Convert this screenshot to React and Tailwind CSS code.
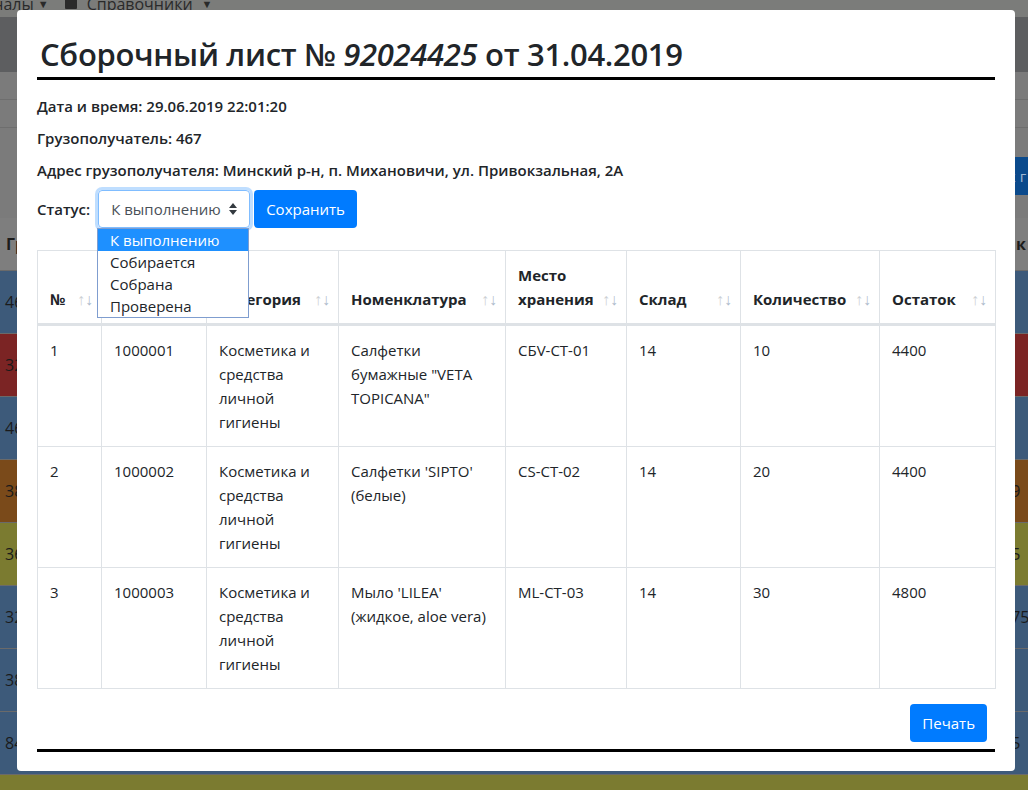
/* Сборочный лист — модальное окно */
const font = { fontFamily: '"Open Sans", "Noto Sans", sans-serif' };

const rows = [
  { n: "1", code: "1000001", cat: "Косметика и средства личной гигиены", name: 'Салфетки бумажные "VETA TOPICANA"', place: "СБV-СТ-01", store: "14", qty: "10", rest: "4400" },
  { n: "2", code: "1000002", cat: "Косметика и средства личной гигиены", name: "Салфетки 'SIPTO' (белые)", place: "CS-CT-02", store: "14", qty: "20", rest: "4400" },
  { n: "3", code: "1000003", cat: "Косметика и средства личной гигиены", name: "Мыло 'LILEA' (жидкое, aloe vera)", place: "ML-CT-03", store: "14", qty: "30", rest: "4800" },
];

const heads = ["№", "", "Категория", "Номенклатура", "Место хранения", "Склад", "Количество", "Остаток"];
const widths = [64, 105, 132, 167, 121, 114, 139, 116];

const bgRows = [
  { c: "bg-[#3d5a7a]", l: "46", r: "" },
  { c: "bg-[#7b2424]", l: "32", r: "" },
  { c: "bg-[#3d5a7a]", l: "46", r: "" },
  { c: "bg-[#7a4a1a]", l: "38", r: "39" },
  { c: "bg-[#7b7b30]", l: "36", r: "25" },
  { c: "bg-[#3d5a7a]", l: "32", r: "175" },
  { c: "bg-[#3d5a7a]", l: "38", r: "" },
  { c: "bg-[#3d5a7a]", l: "84", r: "25" },
  { c: "bg-[#7b7b30]", l: "", r: "" },
];

function SortArrows() {
  return (
    <span className="absolute bottom-[12px] right-[8px] flex text-[16px] leading-[24px] font-normal">
      <span className="text-[#ccd0d4]">↑</span>
      <span className="text-[#aebccc]">↓</span>
    </span>
  );
}

function Backdrop() {
  return (
    <div className="flex flex-col w-full text-[#1c1c1c] text-[16px]">
      <div className="h-[17px] bg-[#7b7c7a] flex items-start overflow-hidden text-[16px] leading-[24px] text-[#2a2a2a]">
        <span className="-ml-[38px] -mt-[8px]">Журналы</span>
        <span className="ml-[4px] -mt-[8px] text-[11px]">▼</span>
        <span className="ml-[16px] inline-block w-[12px] h-[9px] bg-[#2a2a2a] rounded-b-[1px]" />
        <span className="ml-[10px] -mt-[8px]">Справочники</span>
        <span className="ml-[9px] -mt-[8px] text-[11px]">▼</span>
      </div>
      <div className="h-[55px] bg-[#5d5e60]" />
      <div className="h-[28px] bg-[#7b7b7b] border-b border-[#6e6e6e]" />
      <div className="h-[28px] bg-[#7b7b7b] border-b border-[#6e6e6e]" />
      <div className="h-[29px] bg-[#7b7b7b]" />
      <div className="h-[38px] bg-[#7b7b7b] flex justify-end">
        <div className="w-[22px] bg-[#0b4a8c] text-[#9fb6d0] text-[15px] leading-[38px] pl-[2px] whitespace-nowrap overflow-hidden">к г</div>
      </div>
      <div className="h-[23px] bg-[#7b7b7b]" />
      <div className="h-[52px] bg-[#7e7e7e] flex justify-between items-center font-bold px-[6px]">
        <span>Гр</span>
        <span className="mr-[-6px] w-[12px]">к</span>
      </div>
      {bgRows.map((r, i) => (
        <div key={i} className={`${r.c} h-[63px] border-t border-[#6a6a6a] flex justify-between items-center text-[16px] text-[#1a1a1a]`}>
          <span className="pl-[5px] w-[40px]">{r.l}</span>
          <span className="w-[26px]">{r.r}</span>
        </div>
      ))}
    </div>
  );
}

export default function App() {
  return (
    <div style={font} className="relative w-[1028px] h-[790px] overflow-hidden bg-[#7b7b7b]">
      <Backdrop />
      <div className="absolute left-[17px] top-[10px] w-[998px] h-[761px] bg-white rounded-[4px] px-5 pt-[25px] text-[#212529]">
        <h2 className="text-[31px] font-semibold leading-[38px] pb-[4px] border-b-[3px] border-black pl-[3px] tracking-[-0.01em]">
          Сборочный лист № <i>92024425</i> от 31.04.2019
        </h2>
        <div className="mt-[14px] text-[15px] font-semibold leading-[24px]">
          <div className="mb-2">Дата и время: 29.06.2019 22:01:20</div>
          <div className="mb-2">Грузополучатель: 467</div>
          <div className="mb-2">Адрес грузополучателя: Минский р-н, п. Михановичи, ул. Привокзальная, 2А</div>
        </div>
        <div className="relative flex items-center">
          <span className="text-[15px] font-semibold mr-2">Статус:</span>
          <div className="w-[152px] h-[38px] border border-[#80bdff] rounded-[4px] shadow-[0_0_0_3px_rgba(0,123,255,0.25)] flex items-center justify-between pl-[12px] pr-[12px] text-[15px] text-[#495057]">
            <span>К выполнению</span>
            <svg width="8" height="12" viewBox="0 0 8 12"><path d="M4 0 L8 5 H0 Z M4 12 L0 7 H8 Z" fill="#343a40" /></svg>
          </div>
          <button className="ml-1 h-[38px] px-3 rounded-[4px] bg-[#007bff] text-white text-[15px]">Сохранить</button>
          <div className="absolute left-[60px] top-[38px] z-10 w-[152px] bg-white border border-[#7f9dcf] text-[15px] leading-[22px] text-[#212529]">
            <div className="bg-[#1e90ff] text-white pl-[12px]">К выполнению</div>
            <div className="pl-[12px]">Собирается</div>
            <div className="pl-[12px]">Собрана</div>
            <div className="pl-[12px]">Проверена</div>
          </div>
        </div>
        <table className="mt-[22px] w-[958px] table-fixed border-collapse text-[15px] leading-[24px]">
          <colgroup>
            {widths.map((w, i) => <col key={i} style={{ width: w }} />)}
          </colgroup>
          <thead>
            <tr>
              {heads.map((h, i) => (
                <th key={i} className="relative align-bottom text-left font-bold border border-[#dee2e6] border-b-[3px] pl-3 pr-[30px] py-3">
                  {h}
                  <SortArrows />
                </th>
              ))}
            </tr>
          </thead>
          <tbody>
            {rows.map((r) => (
              <tr key={r.n}>
                {[r.n, r.code, r.cat, r.name, r.place, r.store, r.qty, r.rest].map((v, i) => (
                  <td key={i} className="align-top border border-[#dee2e6] p-3 h-[121px]">{v}</td>
                ))}
              </tr>
            ))}
          </tbody>
        </table>
        <div className="mt-[15px] flex justify-end pb-[7px] border-b-[3px] border-black">
          <button className="mr-2 h-[38px] px-3 rounded-[4px] bg-[#007bff] text-white text-[15px]">Печать</button>
        </div>
      </div>
    </div>
  );
}
